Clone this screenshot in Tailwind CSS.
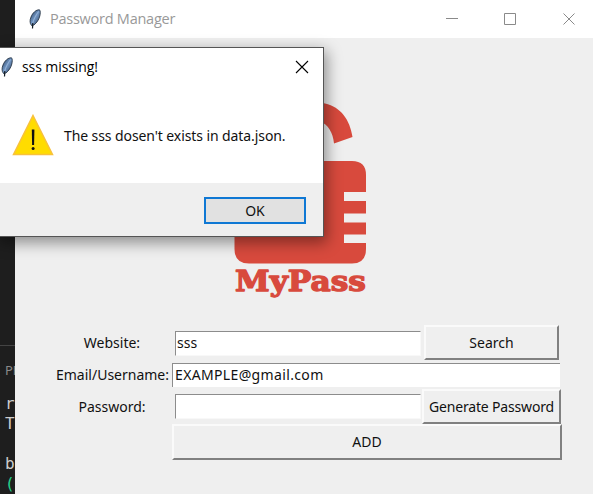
<!DOCTYPE html>
<html lang="en">
<head>
<meta charset="utf-8">
<title>Password Manager</title>
<script src="https://cdn.jsdelivr.net/npm/@tailwindcss/browser@4"></script>
</head>
<body class="relative h-[494px] w-[593px] overflow-hidden bg-[#1e1e1e] font-['Noto_Sans','Open_Sans',sans-serif] text-[14px] leading-[18px] text-[#111]">
<svg width="0" height="0" class="absolute">
  <defs>
    <linearGradient id="feather" x1="0" y1="0" x2="1" y2="1"><stop offset="0" stop-color="#243a58"/><stop offset=".5" stop-color="#7397c4"/><stop offset="1" stop-color="#273a56"/></linearGradient>
    <symbol id="tk" viewBox="0 0 12 20">
      <path d="M10.500 .8C7 .5 3.500 4 2 8 .8 11 .5 14 2.500 16.500L5 16C8 13.500 10 10.500 10.800 7 11.400 4.500 11.600 2 10.500 .8z" fill="url(#feather)" stroke="#1b2838" stroke-width=".8"/>
      <path d="M9.500 2.500C7 6 4.500 10 3.600 15" fill="none" stroke="#a9c3e2" stroke-width=".7"/>
      <path d="M3.800 14L3.500 19.500" fill="none" stroke="#151d26" stroke-width="1.200"/>
    </symbol>
  </defs>
</svg>

<!-- editor behind -->
<div class="w-[15px] overflow-hidden whitespace-nowrap pt-[345px] text-[#ccc]">
  <div class="border-t border-[#444] pt-[15px] pl-[5px] text-[13px] text-[#8a8a8a]">PR</div>
  <div class="pt-[15px] pl-[5px] font-['DejaVu_Sans_Mono',monospace] text-[16px] leading-[20px]">
    <div>r</div><div>To</div><div class="pt-[20px]">b</div><div class="text-[#23d18b]">(</div>
  </div>
</div>

<!-- main window -->
<main class="absolute top-0 left-[15px] h-[494px] w-[578px] bg-[#efefef]">
  <header class="flex h-[38px] items-center bg-white pl-[14px]">
    <svg class="h-[20px] w-[12px]"><use href="#tk"/></svg>
    <span class="ml-[9px] whitespace-nowrap font-['Open_Sans',sans-serif] text-[14.500px] tracking-[-0.250px] text-[#999]">Password Manager</span>
    <svg class="ml-auto" width="148" height="38" viewBox="445 0 148 38" fill="none" stroke="#8a8a8a"><path d="M446 18.500h12"/><path d="M504.500 13.500h11v11h-11z"/><path d="M563.500 13.500l11 11m0-11l-11 11"/></svg>
  </header>
  <svg class="ml-[215px] block" width="140" height="262" viewBox="230 38 140 262" fill="#d84a3d">
    <path d="M300 104Q313 99 325 103.500C341 107 350 120 352.500 137L334 143.500C333 132 328 125 320 121L300 118z"/>
    <path d="M248 161H352Q366 161 366 175V192H344V201H366V213.500H344V222.500H366V234.500H344V243H366V249Q366 263.500 352 263.500H249Q234.500 263.500 234.500 249V175Q234.500 161 248 161z"/>
    <text x="235" y="290.500" textLength="131" lengthAdjust="spacingAndGlyphs" font-family="DejaVu Serif" font-weight="700" font-size="28" stroke="#d84a3d" stroke-width="1.300" stroke-linejoin="round">MyPass</text>
  </svg>
  <form class="ml-[37px] grid w-[510px] grid-cols-[120px_auto] pt-[25px]">
    <div class="flex h-[36px] items-center justify-center">Website:</div>
    <div class="flex h-[36px] items-start">
      <div class="mt-[6px] ml-[3px] h-[25px] w-[246px] border border-t-[#8c8c8c] border-r-[#f8f8f8] border-b-[#f8f8f8] border-l-[#8c8c8c] bg-white pt-[2px] pl-[1px]">sss</div>
      <div class="ml-[3px] flex h-[35px] w-[135px] items-center justify-center border-2 border-t-[#fafafa] border-r-[#808080] border-b-[#808080] border-l-[#fafafa]">Search</div>
    </div>
    <div class="flex h-[28px] items-center whitespace-nowrap pl-[4px]">Email/Username:</div>
    <div class="h-[28px] pt-[2px]"><div class="h-[24px] w-[388px] border-t border-l border-[#8c8c8c] bg-white pt-[2px] pl-[2px] tracking-[0.350px]">EXAMPLE@gmail.com</div></div>
    <div class="flex h-[35px] items-center justify-center">Password:</div>
    <div class="flex h-[35px] items-start">
      <div class="mt-[5px] ml-[3px] h-[25px] w-[246px] border border-t-[#8c8c8c] border-r-[#f8f8f8] border-b-[#f8f8f8] border-l-[#8c8c8c] bg-white"></div>
      <div class="ml-[1px] flex h-[35px] w-[139px] items-center justify-center whitespace-nowrap border-2 border-t-[#fafafa] border-r-[#808080] border-b-[#808080] border-l-[#fafafa] tracking-[-0.180px]">Generate Password</div>
    </div>
    <div class="col-start-2 flex h-[36px] w-[390px] items-center justify-center border-2 border-t-[#fafafa] border-r-[#808080] border-b-[#808080] border-l-[#fafafa]">ADD</div>
  </form>
</main>

<!-- message box -->
<section class="absolute top-[47px] left-[-2px] flex h-[190px] w-[326px] flex-col border border-[#555] bg-white shadow-[2px_5px_14px_1px_rgba(0,0,0,0.4)]">
  <header class="flex h-[38px] items-center pl-[2px]">
    <svg class="h-[20px] w-[12px]"><use href="#tk"/></svg>
    <span class="ml-[9px] font-['Open_Sans',sans-serif] tracking-[-0.080px] text-black">sss missing!</span>
    <svg class="mr-[14px] ml-auto" width="14" height="14" fill="none" stroke="#000" stroke-width="1.100"><path d="M1 1l12 12M13 1L1 13"/></svg>
  </header>
  <div class="flex h-[97px] items-start pt-[28px] pl-[13px]">
    <svg width="42" height="42" viewBox="0 0 42 42"><path d="M21 1.500L40.500 40.500H1.500z" fill="#ffdc00" stroke="#f8c13c" stroke-width="1.500"/><path d="M19.800 15.500h2.600l-.3 15.500h-2z" fill="#111"/><circle cx="21.100" cy="34.500" r="1.500" fill="#111"/></svg>
    <span class="mt-[13px] ml-[10px] whitespace-nowrap tracking-[-0.090px]">The sss dosen't exists in data.json.</span>
  </div>
  <footer class="flex flex-1 items-start justify-end bg-[#efefef] pt-[14px] pr-[17px]">
    <button class="h-[27px] w-[102px] border-2 border-[#0f78d4] bg-[#e1e1e1]">OK</button>
  </footer>
</section>
</body>
</html>
